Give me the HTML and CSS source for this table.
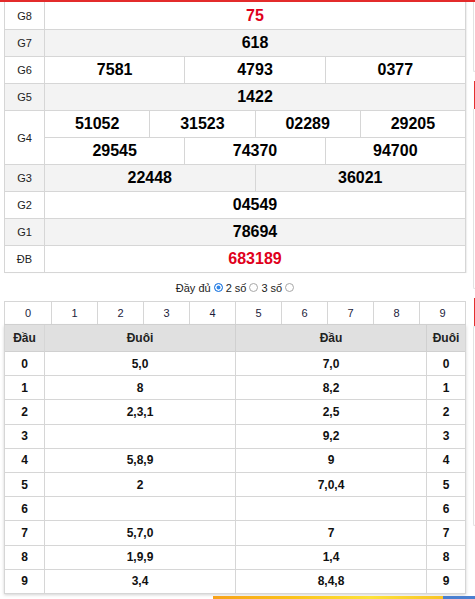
FILE: index.html
```html
<!DOCTYPE html>
<html lang="vi">
<head>
<meta charset="utf-8">
<title>KQXS</title>
<link rel="stylesheet" href="styles.css">
</head>
<body>
<div class="topbar"></div>
<div class="layout">
  <main class="main">
    <div class="kq">
      <div class="row first"><div class="lbl">G8</div><div class="cells"><div class="cell red">75</div></div></div>
      <div class="row alt"><div class="lbl">G7</div><div class="cells"><div class="cell">618</div></div></div>
      <div class="row"><div class="lbl">G6</div><div class="cells"><div class="cell">7581</div><div class="cell">4793</div><div class="cell">0377</div></div></div>
      <div class="row alt"><div class="lbl">G5</div><div class="cells"><div class="cell">1422</div></div></div>
      <div class="row g4"><div class="lbl">G4</div>
        <div class="stack">
          <div class="cells sub"><div class="cell">51052</div><div class="cell">31523</div><div class="cell">02289</div><div class="cell">29205</div></div>
          <div class="cells"><div class="cell">29545</div><div class="cell">74370</div><div class="cell">94700</div></div>
        </div>
      </div>
      <div class="row alt"><div class="lbl">G3</div><div class="cells"><div class="cell">22448</div><div class="cell">36021</div></div></div>
      <div class="row"><div class="lbl">G2</div><div class="cells"><div class="cell">04549</div></div></div>
      <div class="row alt"><div class="lbl">G1</div><div class="cells"><div class="cell">78694</div></div></div>
      <div class="row"><div class="lbl">ĐB</div><div class="cells"><div class="cell red">683189</div></div></div>
    </div>
    <div class="opts">Đầy đủ <span class="radio on"></span> 2 số <span class="radio"></span> 3 số <span class="radio"></span></div>
    <div class="digits">
      <div class="d">0</div><div class="d">1</div><div class="d">2</div><div class="d">3</div><div class="d">4</div>
      <div class="d">5</div><div class="d">6</div><div class="d">7</div><div class="d">8</div><div class="d">9</div>
    </div>
    <div class="loto">
      <div class="lh">Đầu</div><div class="lh">Đuôi</div><div class="lh">Đầu</div><div class="lh">Đuôi</div>
      <div class="lc">0</div><div class="lc">5,0</div><div class="lc">7,0</div><div class="lc">0</div>
      <div class="lc">1</div><div class="lc">8</div><div class="lc">8,2</div><div class="lc">1</div>
      <div class="lc">2</div><div class="lc">2,3,1</div><div class="lc">2,5</div><div class="lc">2</div>
      <div class="lc">3</div><div class="lc"></div><div class="lc">9,2</div><div class="lc">3</div>
      <div class="lc">4</div><div class="lc">5,8,9</div><div class="lc">9</div><div class="lc">4</div>
      <div class="lc">5</div><div class="lc">2</div><div class="lc">7,0,4</div><div class="lc">5</div>
      <div class="lc">6</div><div class="lc"></div><div class="lc"></div><div class="lc">6</div>
      <div class="lc">7</div><div class="lc">5,7,0</div><div class="lc">7</div><div class="lc">7</div>
      <div class="lc">8</div><div class="lc">1,9,9</div><div class="lc">1,4</div><div class="lc">8</div>
      <div class="lc">9</div><div class="lc">3,4</div><div class="lc">8,4,8</div><div class="lc">9</div>
    </div>
    <div class="banner"><div class="banner-blue"></div></div>
  </main>
  <aside class="side">
    <div class="sbox one"></div>
    <div class="sred"></div>
    <div class="sbox two"></div>
    <div class="sred"></div>
    <div class="sbox three"></div>
  </aside>
</div>
</body>
</html>
```
FILE: styles.css
```css
* { box-sizing: border-box; }
html, body { margin: 0; padding: 0; background: #fff; overflow: hidden; }
body { font-family: "Liberation Sans", Arial, sans-serif; color: #111; }

.topbar { height: 2px; background: #e32b2b; position: relative; z-index: 2; }

.layout { display: flex; padding-left: 4px; align-items: flex-start; margin-top: -2px; }
.main { width: 462px; flex: none; padding-top: 2px; }

.kq { border-left: 1px solid #d6d6d6; border-right: 1px solid #d6d6d6; box-shadow: 1px 0 1px rgba(0,0,0,0.06); }
.row { display: grid; grid-template-columns: 40px 1fr; height: 27px; border-bottom: 1px solid #d6d6d6; background: #fff; }
.row.first { height: 28px; }
.row.alt { background: #f3f3f3; }
.row.g4 { height: 54px; }
.lbl { border-right: 1px solid #d6d6d6; display: flex; align-items: center; justify-content: center; font-size: 11px; color: #222; }
.cells { display: flex; height: 100%; }
.stack { display: flex; flex-direction: column; }
.stack .cells { height: 27px; }
.stack .cells.sub { height: 27px; border-bottom: 1px solid #d6d6d6; }
.stack .cells:last-child { height: 26px; }
.cell { flex: 1; display: flex; align-items: center; justify-content: center; font-size: 16px; font-weight: bold; color: #000; }
.cell + .cell { border-left: 1px solid #d6d6d6; }
.cell.red { color: #e0001b; }

.opts { height: 28px; display: flex; align-items: center; justify-content: center; font-size: 11px; color: #222; gap: 3px; padding-top: 1px; }
.radio { display: inline-block; width: 9px; height: 9px; border: 1px solid #a8a8a8; border-radius: 50%; background: #fff; }
.radio.on { border-color: #2a7de1; background: #2f86e8; box-shadow: inset 0 0 0 1.5px #fff; }

.digits { display: grid; grid-template-columns: repeat(10, 1fr); height: 24px; border: 1px solid #d6d6d6; }
.d { display: flex; align-items: center; justify-content: center; font-size: 11px; color: #1c1c3c; }
.d + .d { border-left: 1px solid #d6d6d6; }

.loto { display: grid; grid-template-columns: 40px 191px 191px 1fr; grid-template-rows: 27px; grid-auto-rows: 24.2px; border-left: 1px solid #d6d6d6; border-right: 1px solid #d6d6d6; box-shadow: 0 1px 3px rgba(0,0,0,0.18); }
.lh { height: 27px; background: #e0e0e0; display: flex; align-items: center; justify-content: center; font-size: 12px; font-weight: bold; color: #222; border-bottom: 1px solid #d0d0d0; }
.lc { display: flex; align-items: center; justify-content: center; font-size: 12px; font-weight: bold; color: #111; border-bottom: 1px solid #d6d6d6; }
.lh:not(:nth-child(4n)), .lc:not(:nth-child(4n)) { border-right: 1px solid #d6d6d6; }
.lh:nth-child(2), .lh:nth-child(3) { border-right-color: #d0d0d0; }

.banner { margin-top: 2px; margin-left: 209px; width: 262px; height: 8px; background: linear-gradient(90deg, #f7a21b 0%, #fbc21a 30%, #fde23a 60%, #f9c728 85%, #f6b92a 100%); display: flex; justify-content: flex-end; }
.banner-blue { width: 32px; height: 100%; background: #4a7fd0; }

.side { margin-left: 7px; flex: 1; min-width: 0; display: flex; flex-direction: column; }
.sbox { border: 1px solid #e2e2e2; border-right: none; border-radius: 4px 0 0 4px; background: #fff; }
.sbox.one { height: 72px; }
.sbox.two { height: 180px; border-top: none; border-radius: 0 0 0 4px; }
.sbox.three { height: 200px; }
.sred { height: 28px; margin-top: 9px; margin-left: 1px; background: #e53030; }
```
